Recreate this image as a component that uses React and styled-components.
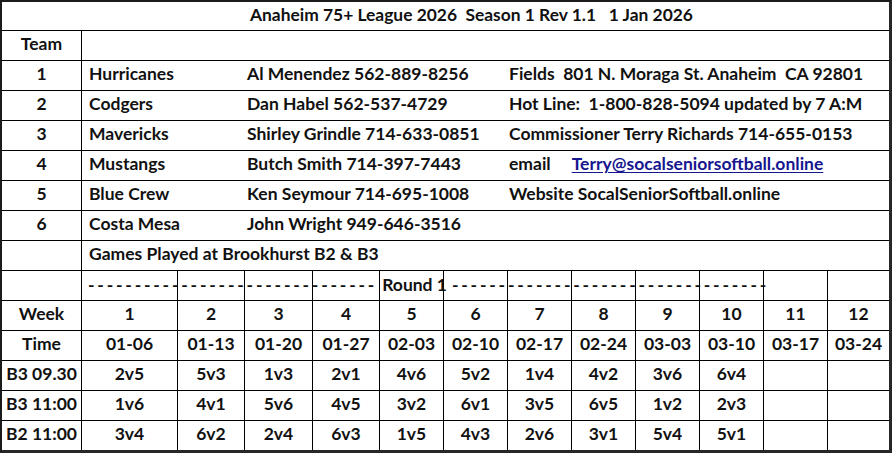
import React from 'react';
import styled, { createGlobalStyle } from 'styled-components';

/* ============ Styles ============ */

const GlobalStyle = createGlobalStyle`
  html, body {
    margin: 0;
    padding: 0;
    background: #ffffff;
  }
  body {
    font-family: Lato, "Open Sans", sans-serif;
    font-weight: 700;
    color: #111;
  }
`;

const Sheet = styled.div`
  display: grid;
  grid-template-columns: 80px 96px 67px 68px 67px 64px 64px 64px 64px 64px 64px 64px 61px;
  grid-template-rows: 29px repeat(13, 30px) 29px;
  width: max-content;
  border-top: 2px solid #1b1b1b;
  border-left: 2px solid #1b1b1b;
  border-right: 3px solid #262626;
  border-bottom: 3px solid #262626;
  font-size: 17.5px;
  line-height: 1;
`;

const Cell = styled.div`
  box-sizing: border-box;
  display: flex;
  align-items: center;
  justify-content: ${(p) => (p.$left ? 'flex-start' : 'center')};
  padding-left: ${(p) => (p.$left ? '7px' : '0')};
  padding-bottom: 3px;
  grid-column: ${(p) => p.$span || 'auto'};
  border-right: ${(p) => (p.$noRight ? 'none' : '1px solid #000')};
  border-bottom: ${(p) => (p.$noBottom ? 'none' : '1px solid #000')};
  white-space: pre;
  position: relative;
  overflow: visible;
`;

const Title = styled(Cell)`
  justify-content: flex-start;
  padding-left: 248px;
  padding-bottom: 2px;
  font-size: 17.4px;
`;

const InfoLine = styled.div`
  display: grid;
  grid-template-columns: 158px 262px 1fr;
  align-items: center;
  width: 100%;
`;

const Link = styled.span`
  color: #16168f;
  text-decoration: underline;
  text-underline-offset: 2px;
  margin-left: 21px;
`;

const RoundBanner = styled.span`
  position: absolute;
  left: 6px;
  top: 50%;
  transform: translateY(-55%);
  white-space: pre;
  z-index: 1;
  display: flex;
  align-items: center;
`;

const Dashes = styled.span`
  letter-spacing: 2.8px;
`;

const RoundLabel = styled.span`
  margin: 0 5px 0 5px;
`;

/* ============ Data ============ */

const teams = [
  ['1', 'Hurricanes', 'Al Menendez 562-889-8256', 'Fields  801 N. Moraga St. Anaheim  CA 92801'],
  ['2', 'Codgers', 'Dan Habel 562-537-4729', 'Hot Line:  1-800-828-5094 updated by 7 A:M'],
  ['3', 'Mavericks', 'Shirley Grindle 714-633-0851', 'Commissioner Terry Richards 714-655-0153'],
  ['4', 'Mustangs', 'Butch Smith 714-397-7443', 'email'],
  ['5', 'Blue Crew', 'Ken Seymour 714-695-1008', 'Website SocalSeniorSoftball.online'],
  ['6', 'Costa Mesa', 'John Wright 949-646-3516', ''],
];

const weeks = ['1', '2', '3', '4', '5', '6', '7', '8', '9', '10', '11', '12'];
const dates = ['01-06', '01-13', '01-20', '01-27', '02-03', '02-10', '02-17', '02-24', '03-03', '03-10', '03-17', '03-24'];

const slots = [
  ['B3 09.30', ['2v5', '5v3', '1v3', '2v1', '4v6', '5v2', '1v4', '4v2', '3v6', '6v4', '', '']],
  ['B3 11:00', ['1v6', '4v1', '5v6', '4v5', '3v2', '6v1', '3v5', '6v5', '1v2', '2v3', '', '']],
  ['B2 11:00', ['3v4', '6v2', '2v4', '6v3', '1v5', '4v3', '2v6', '3v1', '5v4', '5v1', '', '']],
];

function ScheduleRow({ label, values, last }) {
  return (
    <>
      <Cell $noBottom={last}>{label}</Cell>
      {values.map((v, i) => (
        <Cell key={i} $noRight={i === values.length - 1} $noBottom={last}>
          {v}
        </Cell>
      ))}
    </>
  );
}

function App() {
  return (
    <>
      <GlobalStyle />
      <Sheet>
        <Title $span="1 / -1" $noRight>
          {'Anaheim 75+ League 2026  Season 1 Rev 1.1   1 Jan 2026'}
        </Title>

        <Cell>Team</Cell>
        <Cell $span="2 / -1" $noRight />

        {teams.map(([num, name, contact, info]) => (
          <React.Fragment key={num}>
            <Cell>{num}</Cell>
            <Cell $span="2 / -1" $noRight $left>
              <InfoLine>
                <span>{name}</span>
                <span>{contact}</span>
                <span>
                  {info}
                  {num === '4' && <Link>Terry@socalseniorsoftball.online</Link>}
                </span>
              </InfoLine>
            </Cell>
          </React.Fragment>
        ))}

        <Cell />
        <Cell $span="2 / -1" $noRight $left>Games Played at Brookhurst B2 &amp; B3</Cell>

        <Cell />
        {weeks.map((w, i) => (
          <Cell key={w} $noRight={i === weeks.length - 1}>
            {i === 0 && (
              <RoundBanner>
                <Dashes>{'-'.repeat(31)}</Dashes>
                <RoundLabel>Round 1</RoundLabel>
                <Dashes>{'-'.repeat(34)}</Dashes>
              </RoundBanner>
            )}
          </Cell>
        ))}

        <ScheduleRow label="Week" values={weeks} />
        <ScheduleRow label="Time" values={dates} />
        {slots.map(([label, games], i) => (
          <ScheduleRow key={label} label={label} values={games} last={i === slots.length - 1} />
        ))}
      </Sheet>
    </>
  );
}

export default App;
